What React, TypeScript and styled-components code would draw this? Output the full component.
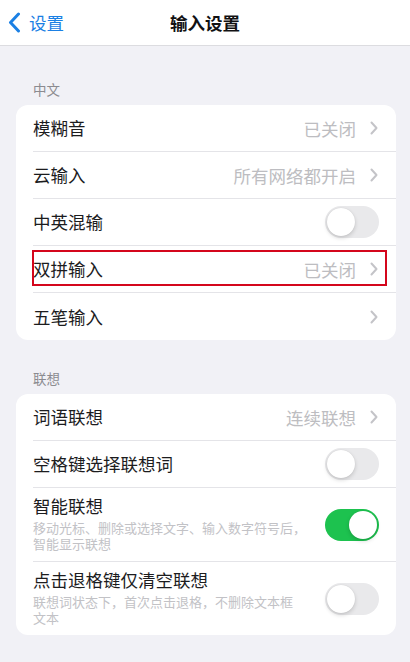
import React from 'react';
import styled, {createGlobalStyle} from 'styled-components';

const GlobalStyle = createGlobalStyle`
  html, body {
    margin: 0;
    padding: 0;
    background: #f1f1f6;
    font-family: "Noto Sans CJK SC", "Noto Sans", sans-serif;
    -webkit-font-smoothing: antialiased;
  }
`;

const Screen = styled.div`
  width: 410px;
  min-height: 662px;
  background: #f1f1f6;
`;

const NavBar = styled.header`
  height: 46px;
  background: #ffffff;
  border-bottom: 1px solid #dcdce0;
  box-sizing: border-box;
  display: grid;
  grid-template-columns: 1fr auto 1fr;
  align-items: center;
`;

const BackButton = styled.div`
  display: flex;
  align-items: center;
  gap: 8px;
  padding-left: 8px;
  color: #1b80e4;
  font-size: 17.5px;
`;

const NavTitle = styled.div`
  font-size: 17.5px;
  font-weight: 600;
  color: #111113;
`;

const Content = styled.main`
  padding: 0 14px 0 16px;
`;

const SectionLabel = styled.div<{first?: boolean}>`
  font-size: 13.5px;
  line-height: 18px;
  color: #8b8b90;
  padding: ${({first}) => (first ? '34px' : '29px')} 17px 7px;
`;

const Card = styled.section`
  background: #ffffff;
  border-radius: 12px;
  overflow: hidden;
`;

const Row = styled.div<{tall?: boolean; last?: boolean}>`
  position: relative;
  display: flex;
  align-items: center;
  min-height: ${({tall}) => (tall ? '73px' : '47px')};
  margin-left: 17px;
  padding-right: 17px;
  box-sizing: border-box;
  border-bottom: ${({last}) => (last ? 'none' : '1px solid #e4e4e8')};
`;

const TextBlock = styled.div`
  flex: 0 0 278px;
  display: flex;
  flex-direction: column;
  padding: 7px 0 9px;
`;

const Title = styled.div`
  flex: 1;
  font-size: 17.5px;
  line-height: 22px;
  color: #1c1c1e;
  white-space: nowrap;
`;

const Subtitle = styled.div`
  margin-top: 3px;
  font-size: 13px;
  line-height: 16px;
  color: #c2c2c6;
`;

const SubtitleLine = styled.div`
  white-space: nowrap;
`;

const Value = styled.div`
  font-size: 17.5px;
  color: #bdbdc1;
  margin-right: 14px;
`;

const Chevron = styled.svg`
  width: 8px;
  height: 14px;
  margin-right: 1px;
  flex-shrink: 0;
`;

const Track = styled.div<{on?: boolean}>`
  width: 54px;
  height: 32px;
  border-radius: 16px;
  background: ${({on}) => (on ? '#1dc24f' : '#e9e9eb')};
  box-sizing: border-box;
  padding: 2px;
  display: flex;
  justify-content: ${({on}) => (on ? 'flex-end' : 'flex-start')};
  flex-shrink: 0;
  margin-left: auto;
`;

const Knob = styled.div`
  width: 28px;
  height: 28px;
  border-radius: 50%;
  background: #ffffff;
  box-shadow: 0 2px 4px rgba(0, 0, 0, 0.16), 0 0 1px rgba(0, 0, 0, 0.12);
`;

const Highlight = styled.div`
  position: absolute;
  left: -1px;
  top: 4px;
  width: 355px;
  height: 36px;
  border: 2px solid #d4061c;
  box-sizing: border-box;
  pointer-events: none;
`;

const ChevronIcon = () => (
  <Chevron viewBox="0 0 8 14">
    <path
      d="M1.5 1.5 L6.5 7 L1.5 12.5"
      fill="none"
      stroke="#c4c4c8"
      strokeWidth="2"
      strokeLinecap="round"
      strokeLinejoin="round"
    />
  </Chevron>
);

const Toggle: React.FC<{on?: boolean}> = ({on}) => (
  <Track on={on}>
    <Knob />
  </Track>
);

interface LinkRowProps {
  title: string;
  value?: string;
  last?: boolean;
  highlighted?: boolean;
}

const LinkRow: React.FC<LinkRowProps> = ({title, value, last, highlighted}) => (
  <Row last={last}>
    <Title>{title}</Title>
    {value && <Value>{value}</Value>}
    <ChevronIcon />
    {highlighted && <Highlight />}
  </Row>
);

interface SwitchRowProps {
  title: string;
  subtitle?: string[];
  on?: boolean;
  last?: boolean;
}

const SwitchRow: React.FC<SwitchRowProps> = ({title, subtitle, on, last}) => (
  <Row last={last} tall={!!subtitle}>
    {subtitle ? (
      <TextBlock>
        <Title>{title}</Title>
        <Subtitle>
          {subtitle.map(line => (
            <SubtitleLine key={line}>{line}</SubtitleLine>
          ))}
        </Subtitle>
      </TextBlock>
    ) : (
      <Title>{title}</Title>
    )}
    <Toggle on={on} />
  </Row>
);

export default function App() {
  return (
    <>
      <GlobalStyle />
      <Screen>
        <NavBar>
          <BackButton>
            <svg width="13" height="21" viewBox="0 0 13 21">
              <path
                d="M10.5 2 L2.5 10.5 L10.5 19"
                fill="none"
                stroke="#1b80e4"
                strokeWidth="3"
                strokeLinecap="round"
                strokeLinejoin="round"
              />
            </svg>
            <span>设置</span>
          </BackButton>
          <NavTitle>输入设置</NavTitle>
          <div />
        </NavBar>

        <Content>
          <SectionLabel first>中文</SectionLabel>
          <Card>
            <LinkRow title="模糊音" value="已关闭" />
            <LinkRow title="云输入" value="所有网络都开启" />
            <SwitchRow title="中英混输" />
            <LinkRow title="双拼输入" value="已关闭" highlighted />
            <LinkRow title="五笔输入" last />
          </Card>

          <SectionLabel>联想</SectionLabel>
          <Card>
            <LinkRow title="词语联想" value="连续联想" />
            <SwitchRow title="空格键选择联想词" />
            <SwitchRow
              title="智能联想"
              subtitle={['移动光标、删除或选择文字、输入数字符号后，', '智能显示联想']}
              on
            />
            <SwitchRow
              title="点击退格键仅清空联想"
              subtitle={['联想词状态下，首次点击退格，不删除文本框', '文本']}
              last
            />
          </Card>
        </Content>
      </Screen>
    </>
  );
}
